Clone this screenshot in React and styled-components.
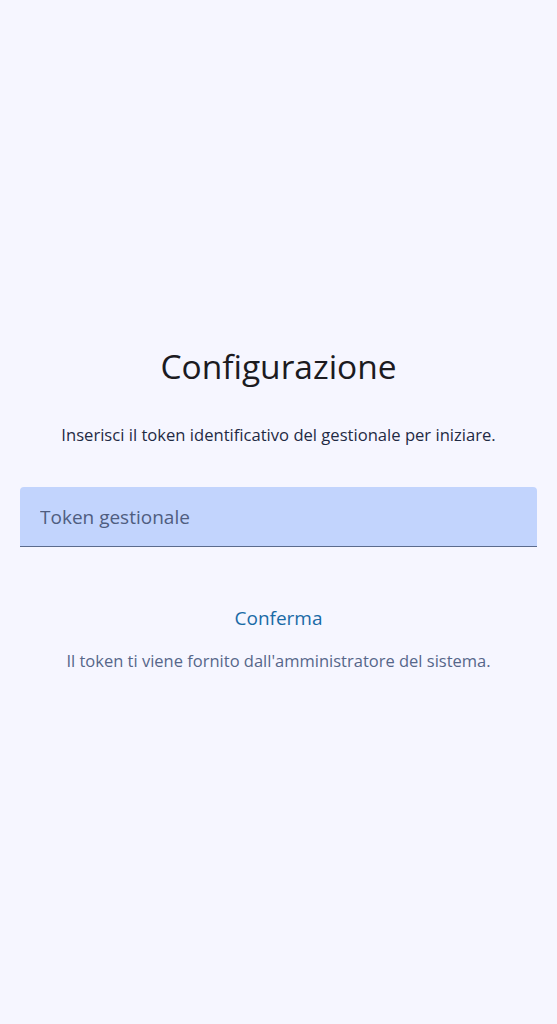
import React from "react";
import styled, { createGlobalStyle } from "styled-components";

const Global = createGlobalStyle`
  html, body { margin: 0; padding: 0; background: #f6f6ff; }
  body { font-family: "Open Sans", "Noto Sans", sans-serif; }
`;

const Page = styled.main`
  min-height: 100vh;
  box-sizing: border-box;
  display: flex;
  flex-direction: column;
  justify-content: center;
  align-items: stretch;
  padding: 0 20px 7px;
  background: #f6f6ff;
`;

const Title = styled.h1`
  margin: 0;
  font-weight: 400;
  font-size: 33.5px;
  line-height: 44px;
  text-align: center;
  color: #1c1b1f;
`;

const Subtitle = styled.p`
  margin: 35px 0 0;
  font-size: 16.6px;
  line-height: 24px;
  text-align: center;
  color: #1f2a44;
`;

const Field = styled.div`
  margin-top: 40px;
  height: 60px;
  box-sizing: border-box;
  background: #c2d4fd;
  border-radius: 4px 4px 0 0;
  border-bottom: 1px solid #5b6b8d;
  display: flex;
  align-items: center;
  padding: 0 20px;
`;

const Input = styled.input`
  flex: 1;
  border: none;
  outline: none;
  background: transparent;
  font-family: inherit;
  font-size: 19px;
  color: #1c1b1f;
  padding: 0;
  &::placeholder { color: #4f5d80; opacity: 1; }
`;

const Button = styled.button`
  align-self: center;
  margin-top: 59px;
  border: none;
  background: transparent;
  font-family: inherit;
  font-size: 19px;
  line-height: 24px;
  color: #1a6aa6;
  padding: 0 8px;
  cursor: pointer;
`;

const Hint = styled.p`
  margin: 19px 0 0;
  font-size: 16.5px;
  line-height: 24px;
  text-align: center;
  color: #56678a;
`;

export default function App() {
  return (
    <>
      <Global />
      <Page>
        <Title>Configurazione</Title>
        <Subtitle>Inserisci il token identificativo del gestionale per iniziare.</Subtitle>
        <Field>
          <Input placeholder="Token gestionale" />
        </Field>
        <Button>Conferma</Button>
        <Hint>Il token ti viene fornito dall'amministratore del sistema.</Hint>
      </Page>
    </>
  );
}
